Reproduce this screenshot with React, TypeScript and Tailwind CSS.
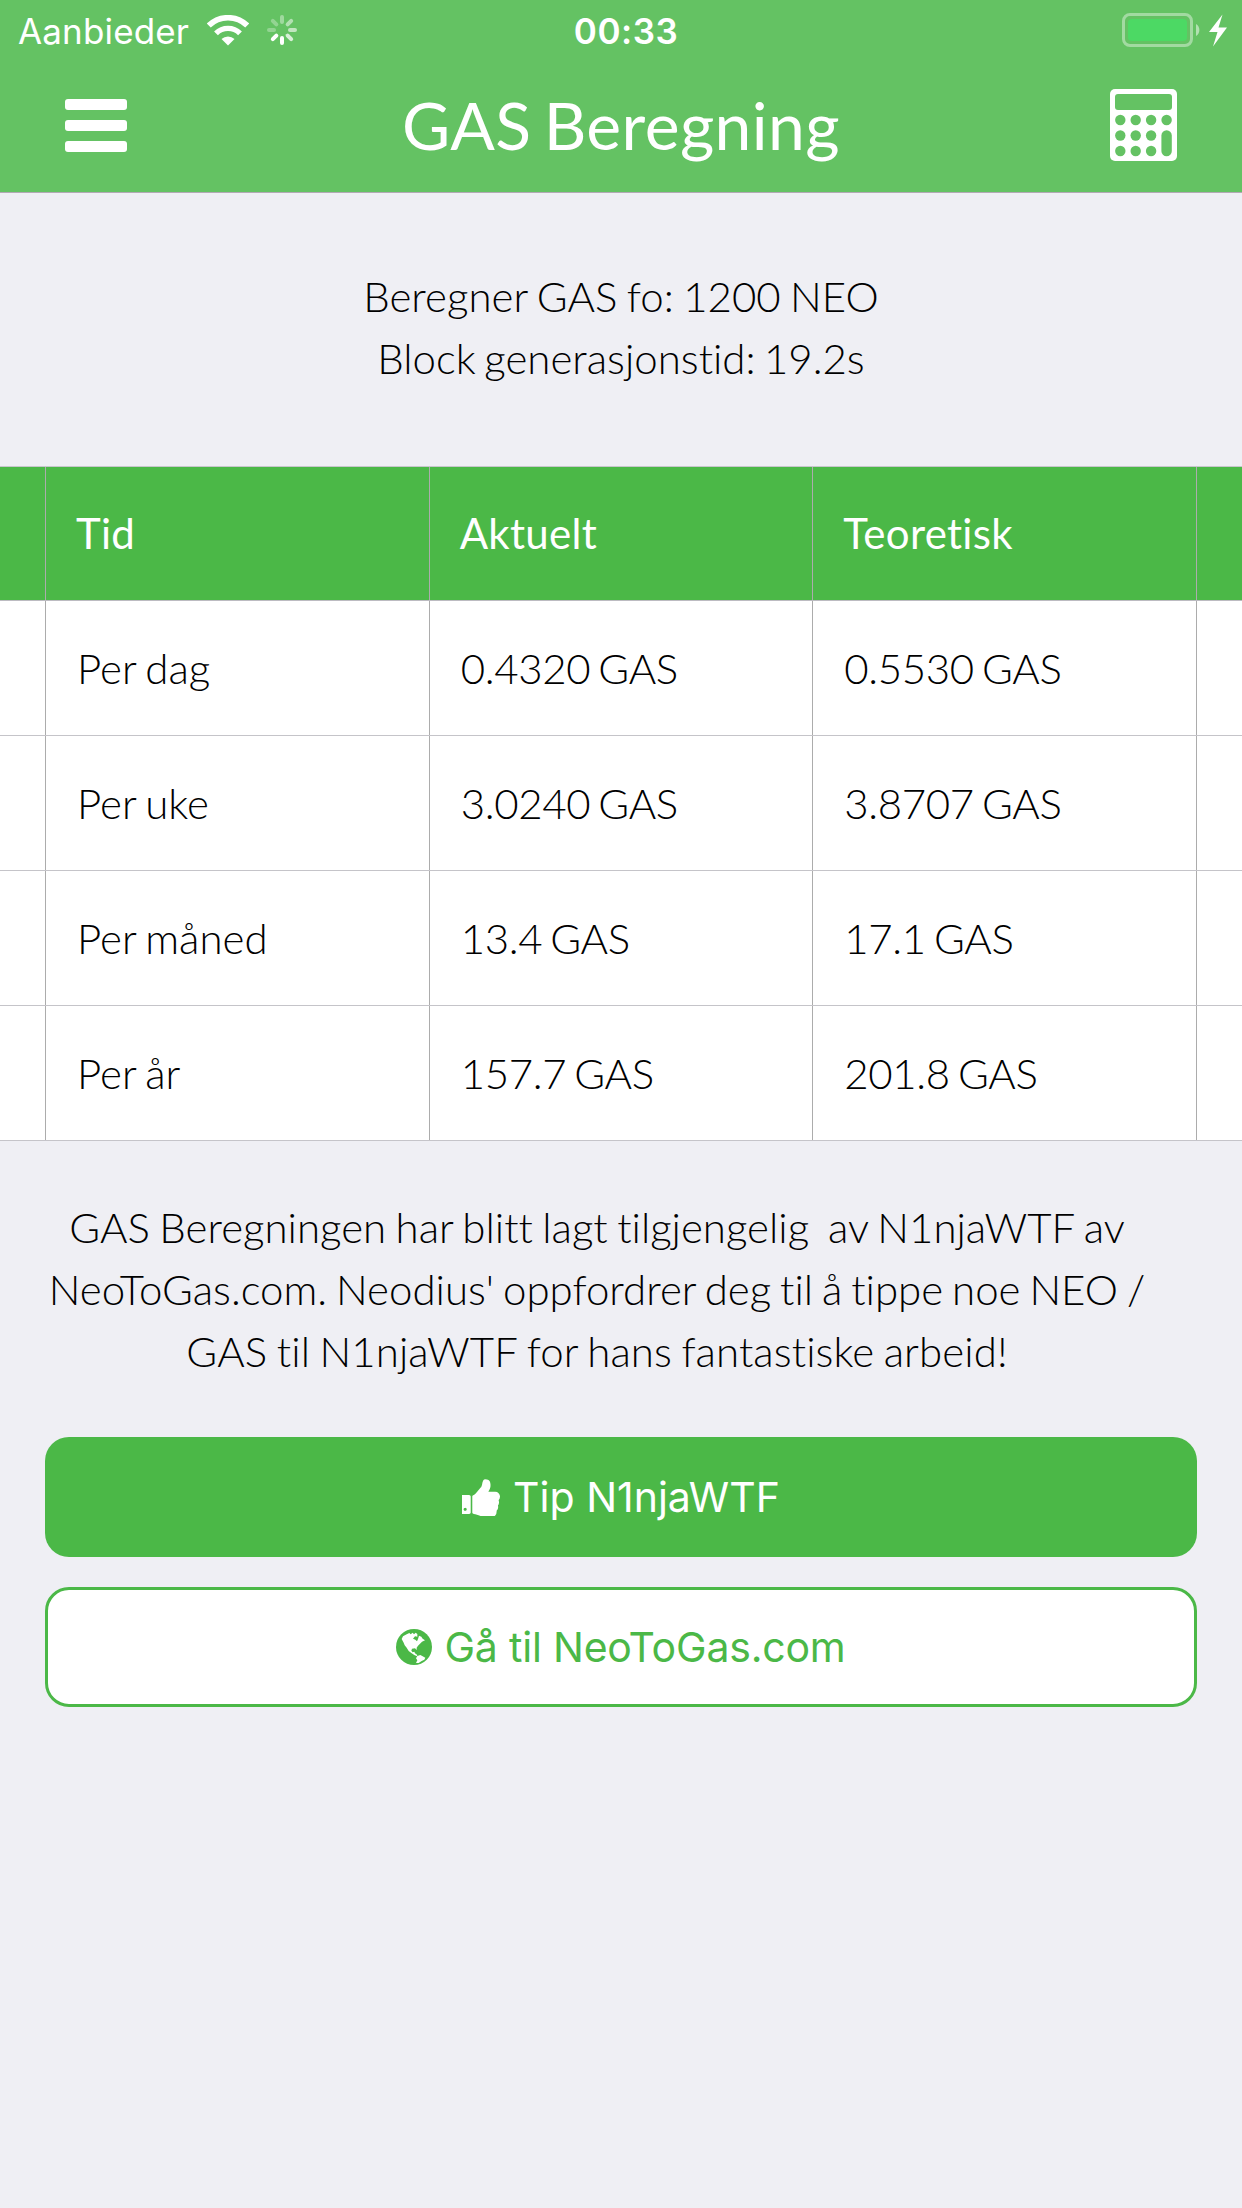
import React from "react";

const rows = [
  ["Per dag", "0.4320 GAS", "0.5530 GAS"],
  ["Per uke", "3.0240 GAS", "3.8707 GAS"],
  ["Per måned", "13.4 GAS", "17.1 GAS"],
  ["Per år", "157.7 GAS", "201.8 GAS"],
];

function Spinner() {
  const o = [0.38, 0.5, 0.6, 0.75, 1, 1, 0.3, 0.3];
  return (
    <svg className="ml-[18px] size-[30px]" viewBox="-15 -15 30 30">
      {o.map((v, i) => (
        <line key={i} x1="0" y1="-8" x2="0" y2="-13" stroke="white" strokeWidth="4" strokeLinecap="round" opacity={v} transform={`rotate(${i * 45})`} />
      ))}
    </svg>
  );
}

function Wifi() {
  return (
    <svg className="ml-[18px] h-[31px] w-[42px]" viewBox="0 0 42 31" fill="none" stroke="white">
      <path d="M1.8 10.5a27.5 27.5 0 0 1 38.4 0" strokeWidth="5.6" />
      <path d="M9 18.3a17 17 0 0 1 24 0" strokeWidth="5.4" />
      <path d="M21 30.5l-6.5-6.4a9.4 9.4 0 0 1 13 0z" fill="white" stroke="none" />
    </svg>
  );
}

function Battery() {
  return (
    <svg className="h-[34px] w-[106px]" viewBox="0 0 106 34">
      <rect x="1.5" y="1.5" width="68" height="31" rx="6.5" fill="none" stroke="white" strokeOpacity=".4" strokeWidth="3" />
      <rect x="6" y="6" width="59" height="22" rx="4" fill="#4cd964" />
      <path d="M74 11a7 7 0 0 1 0 12z" fill="white" fillOpacity=".5" />
      <path d="M100.500 1.500L87 19h8.500L91 33.500L105 14.500h-8.500z" fill="white" />
    </svg>
  );
}

function Calculator() {
  return (
    <svg className="h-[72px] w-[67px]" viewBox="0 0 67 72">
      <rect width="67" height="72" rx="5" fill="white" />
      <g fill="#64c263">
        <rect x="5" y="5" width="57" height="16" rx="3" />
        {[10.3, 25.7, 41.1].map((x) => [31, 46.5, 62].map((y) => <circle key={`${x}-${y}`} cx={x} cy={y} r="5.2" />))}
        <circle cx="56.6" cy="31" r="5.2" />
        <rect x="51.4" y="41.3" width="10.4" height="25.9" rx="5.2" />
      </g>
    </svg>
  );
}

function ThumbsUp() {
  return (
    <svg className="mr-[13px] h-[37px] w-[38px]" viewBox="128 128 1536 1480" fill="currentColor">
      <path d="M320 1344q0-26-19-45t-45-19q-27 0-45.500 19t-18.500 45q0 27 18.500 45.500t45.500 18.500q26 0 45-18.500t19-45.500zm160-512v640q0 26-19 45t-45 19h-288q-26 0-45-19t-19-45v-640q0-26 19-45t45-19h288q26 0 45 19t19 45zm1184 0q0 86-55 149 15 44 15 76 3 76-43 137 17 56 0 117-15 57-54 94 9 112-49 181-64 76-197 78h-129q-66 0-144-15.500t-121.500-29-120.500-39.500q-123-43-158-44-26-1-45-19.500t-19-44.500v-641q0-25 18-43.500t43-20.500q24-2 76-59t101-121q68-87 101-120 18-18 31-48t17.500-48.500 13.500-60.500q7-39 12.500-61t19.500-52 34-50q19-19 45-19 46 0 82.500 10.500t60 26 40.500 40.500 24 45 12 50 5 45 .5 39q0 38-9.500 76t-19 60-27.500 56q-3 6-10 18t-11 22-8 24h277q78 0 135 57t57 135z" />
    </svg>
  );
}

function Globe() {
  return (
    <svg className="mr-[12px] size-[36px]" viewBox="-54 -54 108 108">
      <circle r="54" fill="currentColor" />
      <g fill="white">
        <path d="M-37-24L-33-32L-22-38L-14-42L-10-38L-4-43L0-38L5-43L10-39L10-31L3-32L-3-25L4-22L9-17L12-24L15-34L22-31L26-25L33-20L24-16L18-10L12-4L8 2L8 9L3 4L-6 5L-8 11L-4 16L1 14L3 19L9 23L10 28L2 25L-7 19L-16 12L-22 2L-28-5L-31-13z" />
        <path d="M10 27L19 24L26 28L34 32L31 38L23 42L14 48L6 48L10 40L6 34z" />
      </g>
    </svg>
  );
}

function Row({ cells, head }: { cells: string[]; head?: boolean }) {
  return (
    <div className={head ? "flex h-[134px] border-b border-[#bcbbc1] bg-[#4bb847] px-[45px] tracking-[0.3px] text-white" : "flex h-[135px] border-b border-[#c5c4c9] bg-white px-[45px] font-light text-black"}>
      {cells.map((c, i) => (
        <div key={c} className={i === 2 ? "flex flex-1 items-center border-x border-[#acacac] pl-[30px]" : "flex flex-1 items-center border-l border-[#acacac] pl-[30px]"}>
          <span className={i > 0 && !head ? "pl-px tracking-[-0.35px] [word-spacing:-3px]" : i === 0 && !head ? "pl-px" : ""}>{c}</span>
        </div>
      ))}
    </div>
  );
}

export default function App() {
  return (
    <div className="h-[2208px] w-[1242px] overflow-hidden bg-[#efeff4] font-['Lato',sans-serif] text-[42px] [font-variant-ligatures:none] [word-spacing:-2px]">
      <header className="flex h-[193px] flex-col border-b border-[#b2a9b4] bg-[#64c263] text-white">
        <div className="grid h-[60px] grid-cols-3 items-center font-['Inter',sans-serif] text-[35px]">
          <div className="flex items-center pl-[18px]">
            <span className="pt-[2px] tracking-[0.15px]">Aanbieder</span>
            <Wifi />
            <Spinner />
          </div>
          <span className="pt-[2px] pl-[10px] text-center font-semibold tracking-[0.5px]">00:33</span>
          <div className="flex justify-end pr-[14px]"><Battery /></div>
        </div>
        <div className="flex h-[130px] items-center justify-between px-[65px]">
          <div className="flex w-[67px] flex-col gap-[10px]">
            <i className="h-[11px] w-[62px] rounded-[3px] bg-white" />
            <i className="h-[11px] w-[62px] rounded-[3px] bg-white" />
            <i className="h-[11px] w-[62px] rounded-[3px] bg-white" />
          </div>
          <h1 className="pb-[2px] text-[66px] tracking-[0.4px] [word-spacing:-5px]">GAS Beregning</h1>
          <Calculator />
        </div>
      </header>
      <section className="flex h-[273px] flex-col items-center justify-center pb-[6px] font-light leading-[62px]">
        <p>Beregner GAS fo: 1200 NEO</p>
        <p className="[word-spacing:-3px]">Block generasjonstid: 19.2s</p>
      </section>
      <div className="border-t border-[#c8c7cc]">
        <Row head cells={["Tid", "Aktuelt", "Teoretisk"]} />
        {rows.map((r) => <Row key={r[0]} cells={r} />)}
      </div>
      <section className="mt-[55px] w-[1194px] text-center font-light leading-[62px]">
        <p className="whitespace-pre">GAS Beregningen har blitt lagt tilgjengelig  av N1njaWTF av</p>
        <p className="[word-spacing:-2.500px]">NeoToGas.com. Neodius' oppfordrer deg til å tippe noe NEO /</p>
        <p className="tracking-[0.08px]">GAS til N1njaWTF for hans fantastiske arbeid!</p>
      </section>
      <div className="mx-[45px] mt-[55px] flex flex-col gap-[30px] font-['Inter',sans-serif] text-[41px] [word-spacing:0px]">
        <button className="flex h-[120px] items-center justify-center rounded-[24px] bg-[#4bb847] text-white">
          <ThumbsUp /><span className="pt-[2px]">Tip N1njaWTF</span>
        </button>
        <button className="flex h-[120px] items-center justify-center rounded-[24px] border-3 border-[#4bb847] bg-white tracking-[-0.2px] text-[#4bb847]">
          <Globe /><span className="pt-[2px]">Gå til NeoToGas.com</span>
        </button>
      </div>
    </div>
  );
}
